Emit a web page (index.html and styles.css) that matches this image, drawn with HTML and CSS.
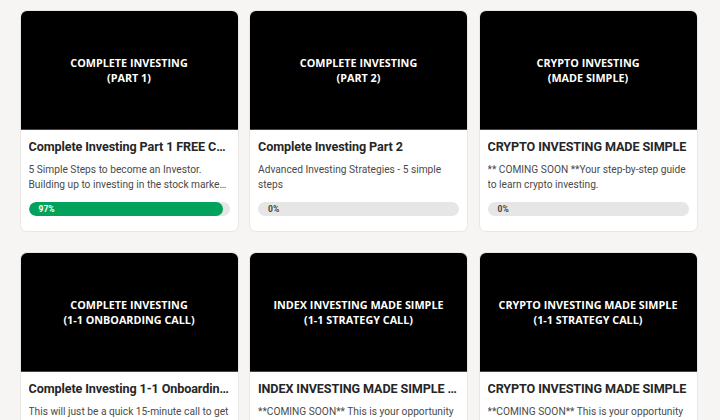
FILE: index.html
```html
<!DOCTYPE html>
<html lang="en">
<head>
  <meta charset="UTF-8">
  <meta name="viewport" content="width=device-width, initial-scale=1.0">
  <title>Courses</title>
  <link rel="stylesheet" href="styles.css">
</head>
<body>
  <div class="courses">

    <div class="card">
      <div class="cover">COMPLETE INVESTING<br>(PART 1)</div>
      <div class="body">
        <h3 class="title">Complete Investing Part 1 FREE Course</h3>
        <p class="desc">5 Simple Steps to become an Investor. Building up to investing in the stock market and growing your wealth.</p>
        <div class="bar"><div class="fill" style="width: 97%">97%</div></div>
      </div>
    </div>

    <div class="card">
      <div class="cover">COMPLETE INVESTING<br>(PART 2)</div>
      <div class="body">
        <h3 class="title">Complete Investing Part 2</h3>
        <p class="desc">Advanced Investing Strategies - 5 simple steps</p>
        <div class="bar"><span class="label">0%</span></div>
      </div>
    </div>

    <div class="card">
      <div class="cover">CRYPTO INVESTING<br>(MADE SIMPLE)</div>
      <div class="body">
        <h3 class="title">CRYPTO INVESTING MADE SIMPLE</h3>
        <p class="desc">** COMING SOON **Your step-by-step guide to learn crypto investing.</p>
        <div class="bar"><span class="label">0%</span></div>
      </div>
    </div>

    <div class="card">
      <div class="cover">COMPLETE INVESTING<br>(1-1 ONBOARDING CALL)</div>
      <div class="body">
        <h3 class="title">Complete Investing 1-1 Onboarding Call</h3>
        <p class="desc">This will just be a quick 15-minute call to get you set up and answer your questions.</p>
        <div class="bar"><span class="label">0%</span></div>
      </div>
    </div>

    <div class="card">
      <div class="cover">INDEX INVESTING MADE SIMPLE<br>(1-1 STRATEGY CALL)</div>
      <div class="body">
        <h3 class="title">INDEX INVESTING MADE SIMPLE (1-1 STRATEGY CALL)</h3>
        <p class="desc">**COMING SOON** This is your opportunity to build your index investing strategy.</p>
        <div class="bar"><span class="label">0%</span></div>
      </div>
    </div>

    <div class="card">
      <div class="cover">CRYPTO INVESTING MADE SIMPLE<br>(1-1 STRATEGY CALL)</div>
      <div class="body">
        <h3 class="title">CRYPTO INVESTING MADE SIMPLE</h3>
        <p class="desc">**COMING SOON** This is your opportunity to build your crypto investing strategy.</p>
        <div class="bar"><span class="label">0%</span></div>
      </div>
    </div>

  </div>
</body>
</html>
```

FILE: styles.css
```css
/* page */
body {
  margin: 0;
  background: #f6f5f3;
  font-family: Roboto, "Liberation Sans", sans-serif;
  color: #222;
  overflow: hidden;
}

/* three column grid of course cards */
.courses {
  display: grid;
  grid-template-columns: repeat(3, 219px);
  column-gap: 10.5px;
  row-gap: 20px;
  padding: 10px 0 0 19.5px;
}

.card {
  background: #fff;
  border: 1px solid #e8e7e4;
  border-radius: 7px;
  overflow: hidden;
}

.cover {
  height: 118px;
  background: #000;
  color: #fff;
  display: flex;
  align-items: center;
  justify-content: center;
  text-align: center;
  font-family: "Open Sans", sans-serif;
  font-weight: 700;
  font-size: 10.8px;
  line-height: 15px;
  border-bottom: 1px solid #444;
}

.body {
  padding: 8px 8px 15px 8px;
}

.title {
  margin: 0;
  font-size: 12.6px;
  font-weight: 700;
  line-height: 18px;
  letter-spacing: -0.1px;
  white-space: nowrap;
  overflow: hidden;
  text-overflow: ellipsis;
  color: #262626;
}

.desc {
  margin: 5.5px 0 0 0;
  font-size: 10.2px;
  line-height: 15px;
  color: #4a4a4a;
  height: 30px;
  display: -webkit-box;
  -webkit-line-clamp: 2;
  -webkit-box-orient: vertical;
  overflow: hidden;
}

/* progress bar */
.bar {
  margin-top: 10.5px;
  height: 14px;
  border-radius: 7px;
  background: #e6e6e6;
  overflow: hidden;
  font-size: 8.5px;
  font-weight: 700;
  line-height: 14px;
}

.fill {
  height: 100%;
  background: #00a25c;
  color: #fff;
  border-radius: 7px;
  padding-left: 10px;
  box-sizing: border-box;
}

.label {
  padding-left: 10px;
  color: #444;
}
```
